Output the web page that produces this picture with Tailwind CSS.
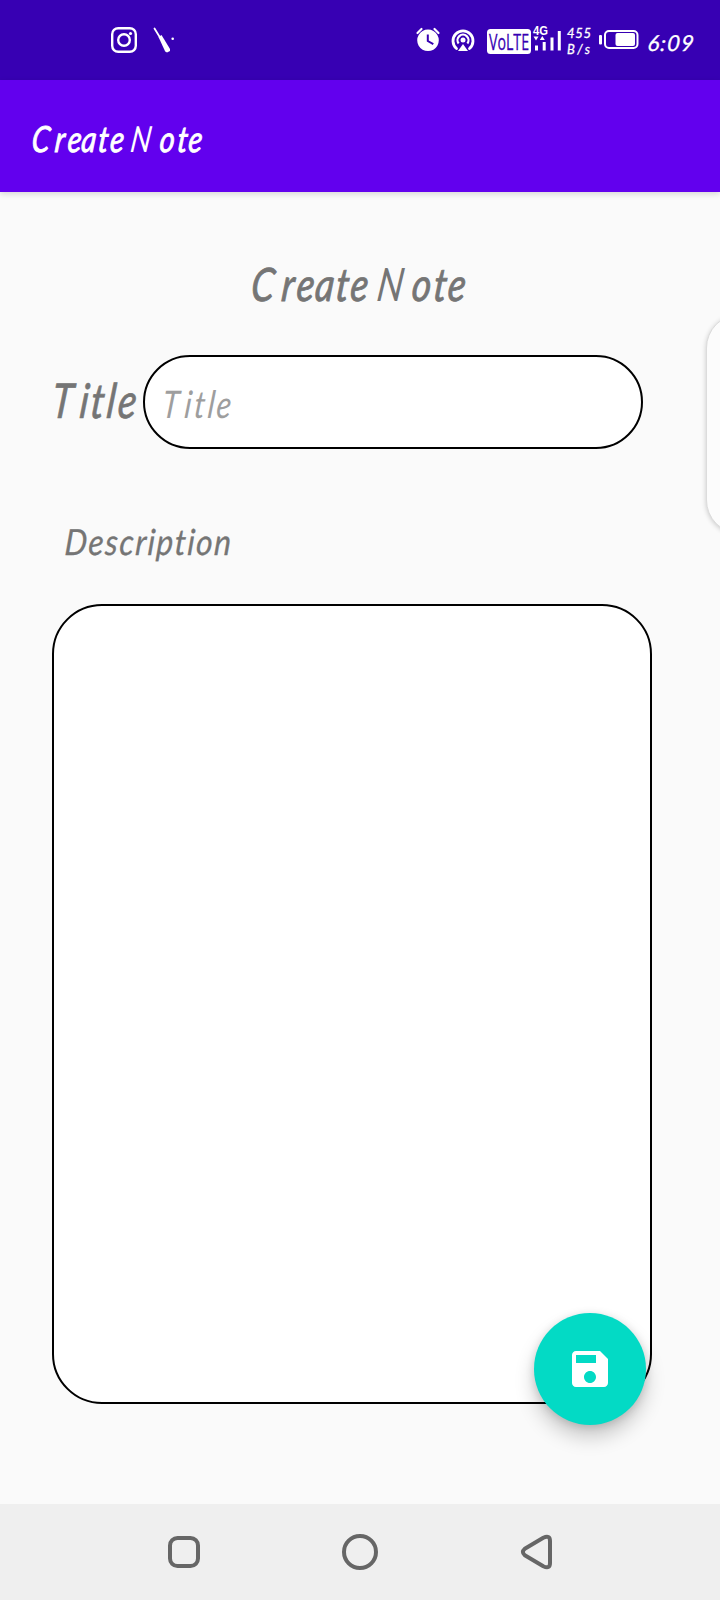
<!DOCTYPE html>
<html lang="en">
<head>
<meta charset="utf-8">
<title>Create Note</title>
<script src="https://cdn.jsdelivr.net/npm/@tailwindcss/browser@4"></script>
</head>
<body class="w-[720px] h-[1600px] overflow-hidden bg-[#fafafa] font-['Lato',sans-serif]">
<div class="relative flex h-[1600px] w-[720px] flex-col overflow-hidden">
  <!-- status bar -->
  <header class="h-20 shrink-0 bg-[#3700b3]">
    <svg class="block h-20 w-[720px]" viewBox="0 0 720 80" fill="none">
      <!-- camera app -->
      <rect x="112.2" y="28.2" width="23.6" height="23.6" rx="6" stroke="#fff" stroke-width="2.4"/>
      <circle cx="124" cy="40" r="5.8" stroke="#fff" stroke-width="2.4"/>
      <circle cx="130.5" cy="33.5" r="1.6" fill="#fff"/>
      <!-- screwdriver -->
      <path d="M154.500 28.500l5.500 9" stroke="#fff" stroke-width="1.800" stroke-linecap="round"/>
      <path d="M158.500 37l3-2 8.500 14v2l-3 1.500-1.800-1z" fill="#fff"/>
      <circle cx="172.700" cy="38.700" r="1.300" fill="#fff"/>
      <!-- alarm -->
      <path fill-rule="evenodd" d="M428 29.500a10.800 10.800 0 1 0 .01 0zM426.800 34.500h2v6l5 2.800-1 1.700-6-3.500z" fill="#fff"/>
      <path d="M417.500 33l4-4M438.500 33l-4-4" stroke="#fff" stroke-width="2.200" stroke-linecap="round"/>
      <!-- hotspot -->
      <path d="M456.500 48.500a10 10 0 1 1 13 0" stroke="#fff" stroke-width="2.800" stroke-linecap="round"/>
      <path d="M458.600 43.500a5.500 5.500 0 1 1 8.800 0" stroke="#fff" stroke-width="2.200"/>
      <path d="M463 44l5 7h-10z" fill="#fff"/>
      <circle cx="463" cy="40" r="2.500" fill="#fff"/>
      <!-- VoLTE -->
      <rect x="487" y="29" width="44" height="25" rx="3.500" fill="#fff"/>
      <text x="489" y="50" font-family="Open Sans, sans-serif" font-size="22" textLength="40" lengthAdjust="spacingAndGlyphs" fill="#3700b3" stroke="#3700b3" stroke-width=".3">VoLTE</text>
      <!-- network signal -->
      <text x="533" y="35" font-family="Liberation Sans, sans-serif" font-weight="700" font-size="13.500" textLength="15" lengthAdjust="spacingAndGlyphs" fill="#fff">4G</text>
      <path d="M533.500 36.500h5l-2.500 4zM539.800 40h5l-2.500-4z" fill="#fff"/>
      <path d="M536.500 45.500v5M544.200 42v8.500M552 37.500v13M559.300 31v19.500" stroke="#fff" stroke-width="3"/>
      <!-- data rate -->
      <g font-style="italic" font-size="13" fill="#fff" stroke="#fff" stroke-width=".3">
        <text x="567" y="38" textLength="24" lengthAdjust="spacing">455</text>
        <text x="567" y="54" textLength="23" lengthAdjust="spacing">B/s</text>
      </g>
      <!-- battery -->
      <rect x="599" y="35" width="3" height="9.500" rx="1" fill="#fff"/>
      <rect x="605" y="31" width="32.500" height="17" rx="4" stroke="#fff" stroke-width="2"/>
      <rect x="615.500" y="33" width="19.500" height="13" rx="2" fill="#fff"/>
      <text transform="translate(647 51) skewX(-6)" font-style="italic" font-size="22" textLength="46" lengthAdjust="spacing" fill="#fff" stroke="#fff" stroke-width=".3">6:09</text>
    </svg>
  </header>
  <!-- app bar -->
  <div class="relative h-28 shrink-0 bg-[#6200ee] pl-[30px] shadow-[0_2px_6px_rgba(0,0,0,0.15)]">
    <svg class="block h-28 w-[200px]" viewBox="0 0 200 112" font-style="italic" font-size="36" fill="#fff" stroke="#fff">
      <text transform="translate(0 72) skewX(-6) scale(.8 1)" stroke-width=".9" x="1 30 46 63 84 99">Create</text>
      <text transform="translate(0 72) skewX(-8) scale(.8 1)" stroke-width="0" x="124">N</text>
      <text transform="translate(0 72) skewX(-6) scale(.8 1)" stroke-width=".9" x="161 183 197">ote</text>
    </svg>
  </div>
  <!-- note form -->
  <main class="flex h-[1312px] shrink-0 flex-col pl-[52px]">
    <svg class="mt-[58px] ml-[194px] block h-[68px] w-[230px] shrink-0" viewBox="0 0 230 68" font-style="italic" font-size="46" fill="#757575" stroke="#757575">
      <text transform="translate(4 51) skewX(-6) scale(.8 1)" stroke-width=".9" x="0 38 57 80 106 124">Create</text>
      <text transform="translate(4 51) skewX(-8) scale(.8 1)" stroke-width="0" x="157">N</text>
      <text transform="translate(4 51) skewX(-6) scale(.8 1)" stroke-width=".9" x="201 228 246">ote</text>
    </svg>
    <div class="mt-[37px] flex h-[94px] shrink-0">
      <svg class="block h-[94px] w-[91px]" viewBox="0 0 91 94" font-style="italic" font-size="48" fill="#757575" stroke="#757575">
        <text transform="translate(0 63) skewX(-6) scale(.8 1)" stroke-width=".7" x="-2 33 47 67 81">Title</text>
      </svg>
      <div class="h-[94px] w-[500px] rounded-[47px] border-2 border-black bg-white pl-4">
        <svg class="block h-[90px] w-[100px]" viewBox="0 0 100 90" font-style="italic" font-size="38" fill="#9e9e9e">
          <text transform="translate(1 61) skewX(-6) scale(.8 1)" x="-1 27 39 56 67">Title</text>
        </svg>
      </div>
    </div>
    <svg class="mt-[61px] ml-2 block h-[70px] w-[190px] shrink-0" viewBox="0 0 190 70" font-style="italic" font-size="36" fill="#757575" stroke="#757575" stroke-width=".3">
      <text transform="translate(4 45) skewX(-4) scale(.88 1)" class="[font-variant-ligatures:none]" textLength="189" lengthAdjust="spacing">Description</text>
    </svg>
    <div class="mt-6 h-[800px] w-[600px] shrink-0 rounded-[50px] border-2 border-black bg-white"></div>
  </main>
  <!-- navigation bar -->
  <nav class="h-24 shrink-0 bg-[#efefef]">
    <svg class="block h-24 w-[720px]" viewBox="0 0 720 96" fill="none" stroke="#666" stroke-width="4">
      <rect x="170" y="34" width="28" height="28" rx="7.500"/>
      <circle cx="360" cy="48" r="16"/>
      <path d="M524.800 44.700L543.300 33.800Q550 30.700 550 37V59Q550 65.300 543.300 62.200L524.800 51.300Q521 48 524.800 44.700Z" stroke-linejoin="round"/>
    </svg>
  </nav>
  <!-- edge panel handle -->
  <div class="absolute left-[706px] top-[314px] h-[220px] w-20 rounded-[34px] border border-[#dcdcdc] bg-[#fcfcfc] shadow-[0_1px_5px_rgba(0,0,0,0.2)]"></div>
  <!-- save button -->
  <button class="absolute left-[534px] top-[1313px] flex size-28 items-center justify-center rounded-full bg-[#03dac5] shadow-[0_12px_20px_rgba(0,0,0,0.2),0_2px_8px_rgba(0,0,0,0.14)]" aria-label="Save">
    <svg class="size-12" viewBox="0 0 24 24" fill="#fff"><path d="M17 3H5c-1.110 0-2 .9-2 2v14c0 1.100.89 2 2 2h14c1.100 0 2-.9 2-2V7l-4-4zm-5 16c-1.660 0-3-1.340-3-3s1.340-3 3-3 3 1.340 3 3-1.340 3-3 3zm3-10H5V5h10v4z"/></svg>
  </button>
</div>
</body>
</html>
